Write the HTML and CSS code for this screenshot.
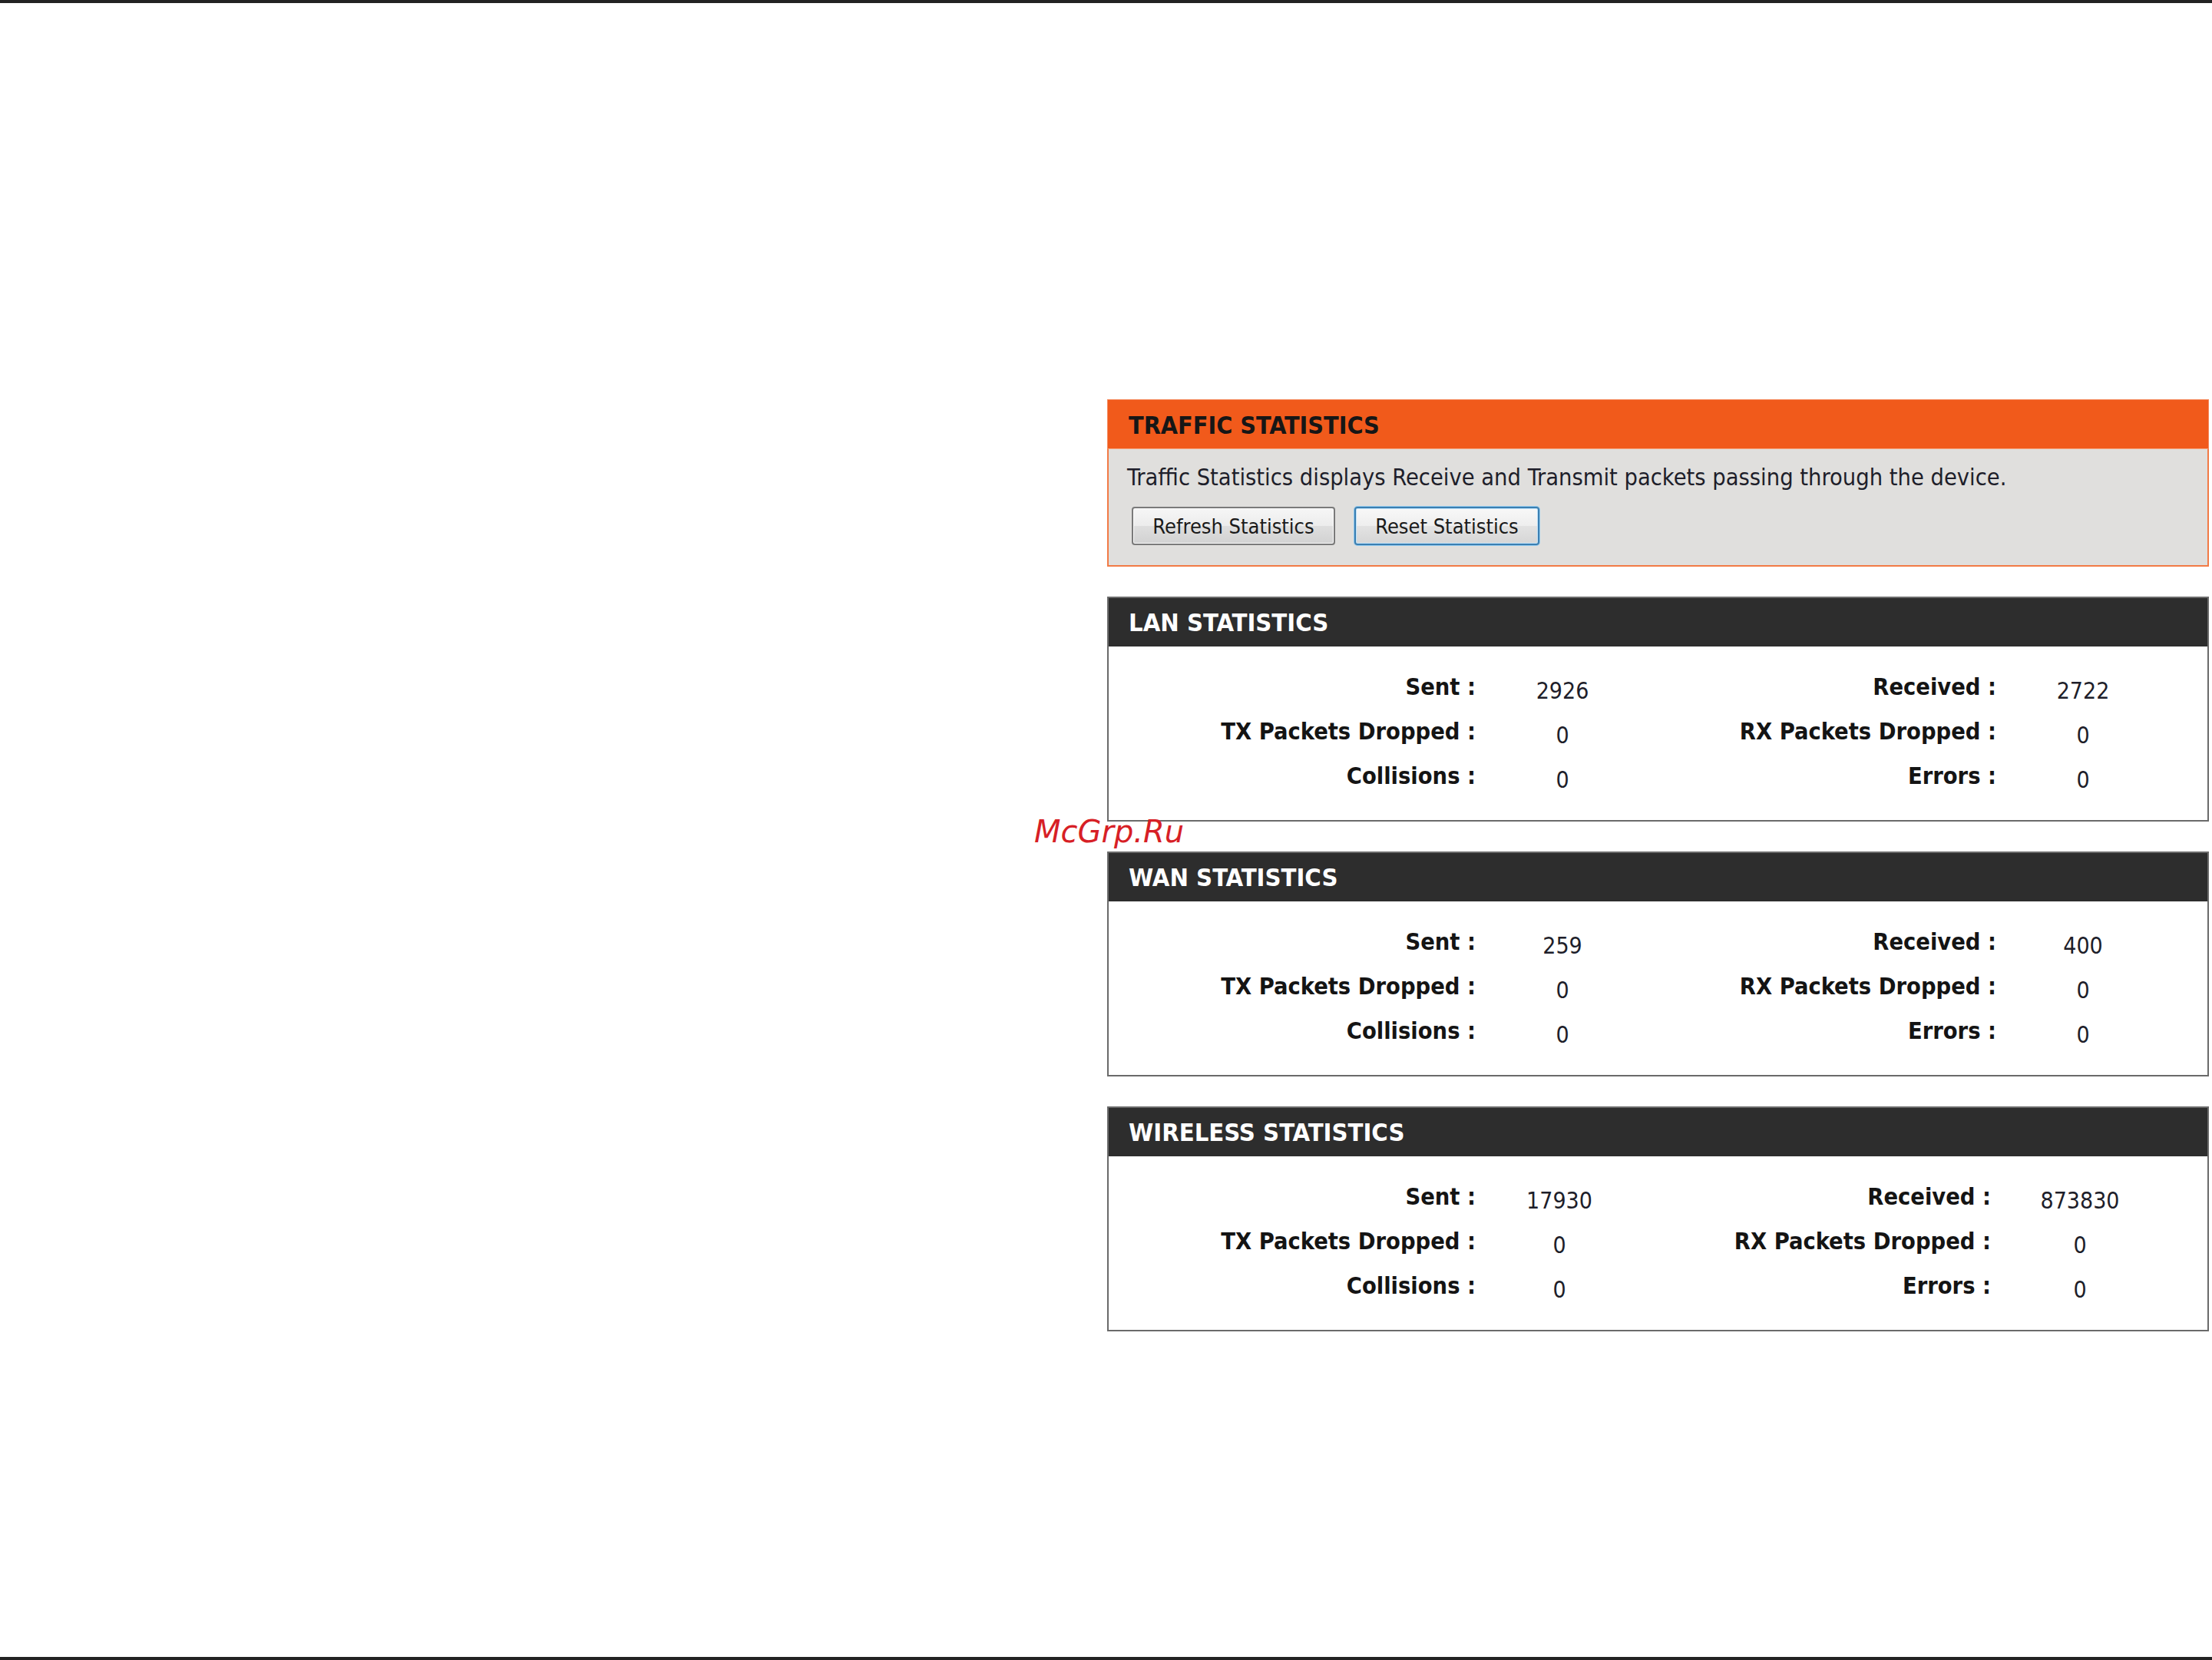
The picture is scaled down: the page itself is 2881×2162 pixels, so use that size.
FILE: index.html
```html
<!DOCTYPE html>
<html lang="en">
<head>
<meta charset="utf-8">
<title>Traffic Statistics</title>
<link rel="stylesheet" href="styles.css">
</head>
<body>
<div class="rule"></div>
<main class="page">
  <section class="panel intro">
    <h2 class="intro-title">TRAFFIC STATISTICS</h2>
    <div class="intro-body">
      <p class="intro-text">Traffic Statistics displays Receive and Transmit packets passing through the device.</p>
      <div class="actions">
        <button class="btn btn-refresh" type="button">Refresh Statistics</button>
        <button class="btn btn-reset" type="button">Reset Statistics</button>
      </div>
    </div>
  </section>

  <section class="panel stats">
    <h2 class="stats-title">LAN STATISTICS</h2>
    <div class="stats-grid">
      <span class="label">Sent :</span><span class="value">2926</span>
      <span class="label">Received :</span><span class="value">2722</span>
      <span class="label">TX Packets Dropped :</span><span class="value">0</span>
      <span class="label">RX Packets Dropped :</span><span class="value">0</span>
      <span class="label">Collisions :</span><span class="value">0</span>
      <span class="label">Errors :</span><span class="value">0</span>
    </div>
  </section>

  <section class="panel stats">
    <h2 class="stats-title">WAN STATISTICS</h2>
    <div class="stats-grid">
      <span class="label">Sent :</span><span class="value">259</span>
      <span class="label">Received :</span><span class="value">400</span>
      <span class="label">TX Packets Dropped :</span><span class="value">0</span>
      <span class="label">RX Packets Dropped :</span><span class="value">0</span>
      <span class="label">Collisions :</span><span class="value">0</span>
      <span class="label">Errors :</span><span class="value">0</span>
    </div>
  </section>

  <section class="panel stats stats-wireless">
    <h2 class="stats-title">WIRELESS STATISTICS</h2>
    <div class="stats-grid">
      <span class="label">Sent :</span><span class="value">17930</span>
      <span class="label">Received :</span><span class="value">873830</span>
      <span class="label">TX Packets Dropped :</span><span class="value">0</span>
      <span class="label">RX Packets Dropped :</span><span class="value">0</span>
      <span class="label">Collisions :</span><span class="value">0</span>
      <span class="label">Errors :</span><span class="value">0</span>
    </div>
  </section>
</main>
<div class="rule"></div>
<span class="watermark">McGrp.Ru</span>
</body>
</html>
```

FILE: styles.css
```css
html, body {
  margin: 0;
  padding: 0;
  background: #ffffff;
}

body {
  height: 100vh;
  display: flex;
  flex-direction: column;
  font-family: "DejaVu Sans Condensed", "DejaVu Sans", sans-serif;
  color: #1a1a1a;
  position: relative;
  overflow: hidden;
}

.rule {
  height: 4px;
  background: #222222;
  flex: none;
}

.page {
  flex: 1;
  padding: 516px 0 0 1442px;
  display: flex;
  flex-direction: column;
  gap: 39px;
}

.panel {
  width: 1435px;
  box-sizing: border-box;
}

/* intro panel */
.intro-title {
  margin: 0;
  height: 64px;
  box-sizing: border-box;
  padding: 3px 0 0 27px;
  display: flex;
  align-items: center;
  background: #f15a1b;
  color: #161616;
  font-size: 32px;
  font-weight: bold;
  border: 1px solid #f4885a;
  border-bottom: none;
}

.intro-body {
  height: 154px;
  box-sizing: border-box;
  background: #e0dfdd;
  border: 2px solid #f27a45;
  border-top: 1px solid #f5a680;
  padding: 17px 0 0 24px;
}

.intro-text {
  margin: 0;
  font-size: 30.5px;
  line-height: 40px;
  color: #1e1e2a;
}

.actions {
  display: flex;
  gap: 25px;
  margin: 18px 0 0 6px;
}

.btn {
  height: 50px;
  box-sizing: border-box;
  padding: 0;
  white-space: nowrap;
  font-family: inherit;
  font-size: 27px;
  color: #1a1a1a;
  border-radius: 4px;
  background: linear-gradient(#f6f6f6 0%, #ececec 50%, #dedede 51%, #d2d2d2 100%);
  border: 2px solid #7a7a7a;
  box-shadow: inset 0 0 0 1px #fbfbfb;
}

.btn-refresh {
  width: 265px;
}

.btn-reset {
  width: 241px;
  border-color: #3c7fb1;
  background: linear-gradient(#f8f8f8 0%, #eeeeee 50%, #e2e2e2 51%, #d6d6d6 100%);
  box-shadow: inset 0 0 0 1px #bfe3fb, 0 0 0 1px #8cc7ee;
}

/* statistics boxes */
.stats {
  border: 2px solid #6a6a6a;
  height: 293px;
}

.stats-title {
  margin: 0;
  height: 63px;
  box-sizing: border-box;
  padding-left: 26px;
  display: flex;
  align-items: center;
  background: #2d2d2d;
  color: #ffffff;
  font-size: 32.5px;
  font-weight: bold;
}

.stats-grid {
  display: grid;
  grid-template-columns: 478px 226px 452px 226px;
  grid-auto-rows: 58px;
  padding-top: 23px;
}

.stats-wireless .stats-grid {
  grid-template-columns: 478px 218px 453px 232px;
}

.label {
  display: flex;
  align-items: center;
  justify-content: flex-end;
  font-weight: bold;
  font-size: 30.5px;
  color: #141414;
}

.value {
  display: flex;
  align-items: center;
  justify-content: center;
  padding-top: 10px;
  font-size: 30px;
  color: #1e1e2a;
}

.watermark {
  position: absolute;
  left: 1347px;
  top: 1063px;
  font-family: "DejaVu Sans", sans-serif;
  font-style: italic;
  font-size: 40px;
  line-height: 1;
  color: #d71f26;
}
```
